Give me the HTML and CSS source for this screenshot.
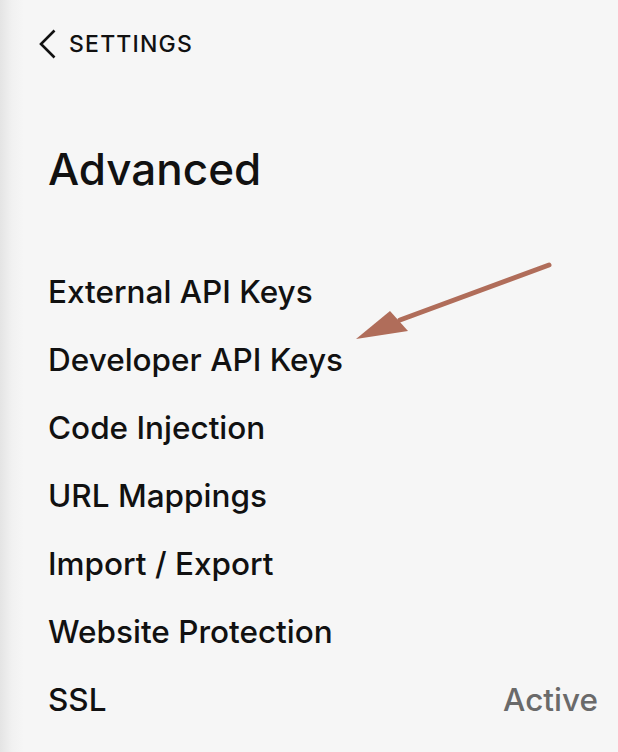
FILE: index.html
```html
<!DOCTYPE html>
<html>
<head>
<meta charset="utf-8">
<link rel="stylesheet" href="styles.css">
</head>
<body>
<div class="panel">
  <a class="back">
    <svg class="chev" width="20" height="30" viewBox="0 0 20 30"><path d="M17.5 1.5 L4 15 L17.5 28.5" fill="none" stroke="#111" stroke-width="2.6"/></svg>
    <span>SETTINGS</span>
  </a>
  <h1 class="title">Advanced</h1>
  <ul class="menu">
    <li class="item">External API Keys</li>
    <li class="item">Developer API Keys</li>
    <li class="item">Code Injection</li>
    <li class="item">URL Mappings</li>
    <li class="item">Import / Export</li>
    <li class="item">Website Protection</li>
    <li class="item"><span>SSL</span><span class="status">Active</span></li>
  </ul>
  <svg class="arrow" width="618" height="752" viewBox="0 0 618 752">
    <line x1="549" y1="265" x2="400" y2="320" stroke="#b06d5a" stroke-width="5" stroke-linecap="round"/>
    <polygon points="356,339 390,311 408,331" fill="#b06d5a"/>
  </svg>
</div>
</body>
</html>
```
FILE: styles.css
```css
html, body { margin: 0; padding: 0; }
body {
  width: 618px;
  height: 752px;
  overflow: hidden;
  background: #f6f6f6;
  font-family: Inter, "Liberation Sans", sans-serif;
  color: #111;
}
.panel {
  position: relative;
  height: 752px;
  box-sizing: border-box;
  padding: 0 20px 0 48px;
  background: linear-gradient(to right, #e4e4e4 0px, #f1f1f1 12px, #f6f6f6 24px);
}
.back {
  display: flex;
  align-items: center;
  gap: 12px;
  margin-left: -11px;
  padding-top: 29px;
  height: 30px;
  font-size: 23px;
  letter-spacing: 1.2px;
  font-weight: 500;
}
.chev { display: block; }
.title {
  margin: 0;
  margin-top: 85px;
  font-size: 44px;
  font-weight: 500;
  line-height: 50px;
}
.menu {
  list-style: none;
  margin: 64px 0 0 0;
  padding: 0;
}
.item {
  display: flex;
  justify-content: space-between;
  height: 68px;
  line-height: 68px;
  font-size: 31.5px;
  font-weight: 500;
}
.status { color: #6a6a6a; }
.arrow { position: absolute; left: 0; top: 0; pointer-events: none; }
```
